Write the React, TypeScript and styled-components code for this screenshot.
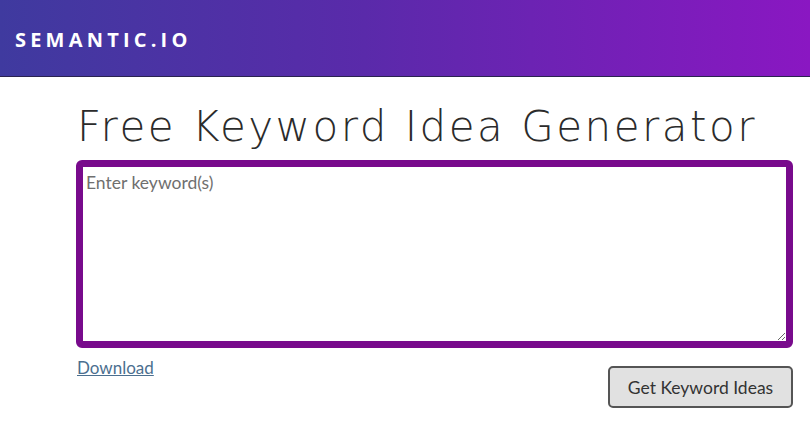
import React from 'react'
import styled, { createGlobalStyle } from 'styled-components'

const GlobalStyle = createGlobalStyle`
  html, body {
    margin: 0;
    padding: 0;
    background: #ffffff;
    font-family: Lato, "Liberation Sans", sans-serif;
  }
`

const Header = styled.header`
  height: 76px;
  display: flex;
  align-items: center;
  padding-left: 15px;
  background: linear-gradient(90deg, #3f3a9f 0%, #5a2aaa 45%, #8a17c2 100%);
  border-bottom: 1px solid #2a2350;
`

const Logo = styled.div`
  color: #ffffff;
  font-family: "Open Sans", "Liberation Sans", sans-serif;
  font-weight: 700;
  font-size: 20px;
  letter-spacing: 4.2px;
  margin-top: 3px;
`

const Main = styled.main`
  width: 717px;
  margin-left: 76px;
  display: flex;
  flex-direction: column;
`

const Title = styled.h1`
  margin: 20px 0 0 1px;
  font-family: "DejaVu Sans", "Liberation Sans", sans-serif;
  font-weight: 200;
  font-size: 42px;
  line-height: 60px;
  color: #2b2b2b;
  letter-spacing: 2.5px;
  white-space: nowrap;
`

const KeywordBox = styled.textarea`
  box-sizing: border-box;
  width: 717px;
  height: 188px;
  margin-top: 3px;
  padding: 5px 3px;
  border: 7px solid #780a8c;
  border-radius: 6px;
  font-family: Lato, "Liberation Sans", sans-serif;
  font-size: 17.5px;
  color: #333;
  outline: none;
  resize: vertical;

  &::placeholder {
    color: #6f6f6f;
  }
`

const Actions = styled.div`
  display: flex;
  justify-content: space-between;
  align-items: flex-start;
  margin-top: 9px;
`

const DownloadLink = styled.a`
  font-size: 17px;
  color: #4b6f8f;
  text-decoration: underline;
  margin-left: 1px;
  cursor: pointer;
`

const SubmitButton = styled.button`
  margin-top: 9px;
  width: 185px;
  height: 42px;
  background: #e1e1e1;
  border: 2px solid #555;
  border-radius: 5px;
  font-family: Lato, "Liberation Sans", sans-serif;
  font-size: 17.5px;
  color: #333;
  cursor: pointer;
`

const App: React.FC = () => {
  return (
    <>
      <GlobalStyle />
      <Header>
        <Logo>SEMANTIC.IO</Logo>
      </Header>
      <Main>
        <Title>Free Keyword Idea Generator</Title>
        <KeywordBox placeholder="Enter keyword(s)" />
        <Actions>
          <DownloadLink>Download</DownloadLink>
          <SubmitButton>Get Keyword Ideas</SubmitButton>
        </Actions>
      </Main>
    </>
  )
}

export default App
